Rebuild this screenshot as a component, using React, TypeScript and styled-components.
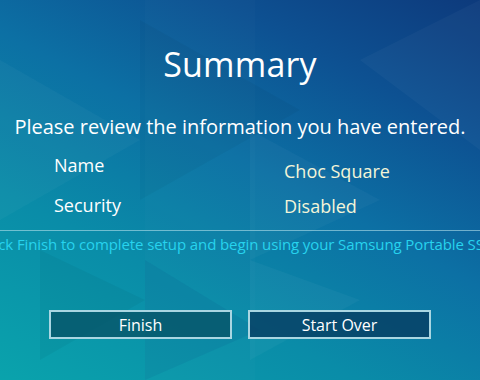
import React from "react";
import styled, { createGlobalStyle } from "styled-components";

const Global = createGlobalStyle`
  html, body { margin: 0; padding: 0; }
  body { width: 480px; height: 380px; overflow: hidden; }
`;

const Screen = styled.div`
  position: relative;
  width: 480px;
  height: 380px;
  overflow: hidden;
  background: linear-gradient(28deg, #0aa3ac 0%, #0a8ca8 30%, #0c70a4 55%, #0d5192 78%, #0d3a7c 100%);
  font-family: "Open Sans", "Noto Sans", sans-serif;
  color: #ffffff;
`;

const Pattern = styled.svg`
  position: absolute;
  inset: 0;
  pointer-events: none;
`;

const Content = styled.div`
  position: relative;
  display: flex;
  flex-direction: column;
  align-items: center;
  padding-top: 40px;
`;

const Title = styled.h1`
  margin: 0;
  font-size: 34px;
  font-weight: 400;
  line-height: 48px;
  letter-spacing: 0.2px;
`;

const Subtitle = styled.p`
  margin: 26px 0 0;
  font-size: 20px;
  line-height: 26px;
  white-space: nowrap;
`;

const Table = styled.div`
  align-self: stretch;
  display: grid;
  grid-template-columns: 230px 1fr;
  padding-left: 54px;
  margin-top: 13px;
  row-gap: 16px;
`;

const Label = styled.div`
  font-size: 18px;
  line-height: 24px;
`;

const Value = styled.div<{ $shift?: number }>`
  font-size: 18px;
  line-height: 24px;
  color: #f3f5d8;
  transform: translateY(${(p) => p.$shift ?? 0}px);
`;

const Divider = styled.div`
  align-self: stretch;
  height: 1px;
  margin-top: 13px;
  background: rgba(180, 225, 235, 0.6);
`;

const Note = styled.p`
  margin: 3px 0 0;
  font-size: 15px;
  line-height: 20px;
  letter-spacing: -0.1px;
  color: #27d3ee;
  white-space: nowrap;
`;

const Buttons = styled.div`
  display: flex;
  gap: 16px;
  margin-top: 56px;
`;

const Button = styled.button<{ $bg: string }>`
  width: 183px;
  height: 29px;
  box-sizing: border-box;
  border: 2px solid #a9d6e2;
  background: ${(p) => p.$bg};
  color: #ffffff;
  font-family: "Open Sans", "Noto Sans", sans-serif;
  font-size: 16px;
  line-height: 22px;
  padding: 0;
`;

export default function App() {
  return (
    <>
      <Global />
      <Screen>
        <Pattern width="480" height="380" viewBox="0 0 480 380">
          <polygon points="0,60 140,140 0,220" fill="rgba(255,255,255,0.03)" />
          <polygon points="140,20 300,110 140,200" fill="rgba(0,0,0,0.035)" />
          <polygon points="40,250 145,300 40,360" fill="rgba(0,0,0,0.04)" />
          <polygon points="145,260 260,330 145,380" fill="rgba(0,40,120,0.08)" />
          <polygon points="250,260 360,300 250,360" fill="rgba(255,255,255,0.035)" />
          <polygon points="360,60 480,0 480,150" fill="rgba(255,255,255,0.03)" />
          <polygon points="250,130 380,200 250,260" fill="rgba(255,255,255,0.03)" />
          <rect x="145" y="0" width="110" height="380" fill="rgba(255,255,255,0.015)" />
        </Pattern>
        <Content>
          <Title>Summary</Title>
          <Subtitle>Please review the information you have entered.</Subtitle>
          <Table>
            <Label>Name</Label>
            <Value $shift={6}>Choc Square</Value>
            <Label>Security</Label>
            <Value $shift={1}>Disabled</Value>
          </Table>
          <Divider />
          <Note>Click Finish to complete setup and begin using your Samsung Portable SSD.</Note>
          <Buttons>
            <Button $bg="rgba(6, 84, 104, 0.8)">Finish</Button>
            <Button $bg="rgba(6, 60, 98, 0.8)">Start Over</Button>
          </Buttons>
        </Content>
      </Screen>
    </>
  );
}
